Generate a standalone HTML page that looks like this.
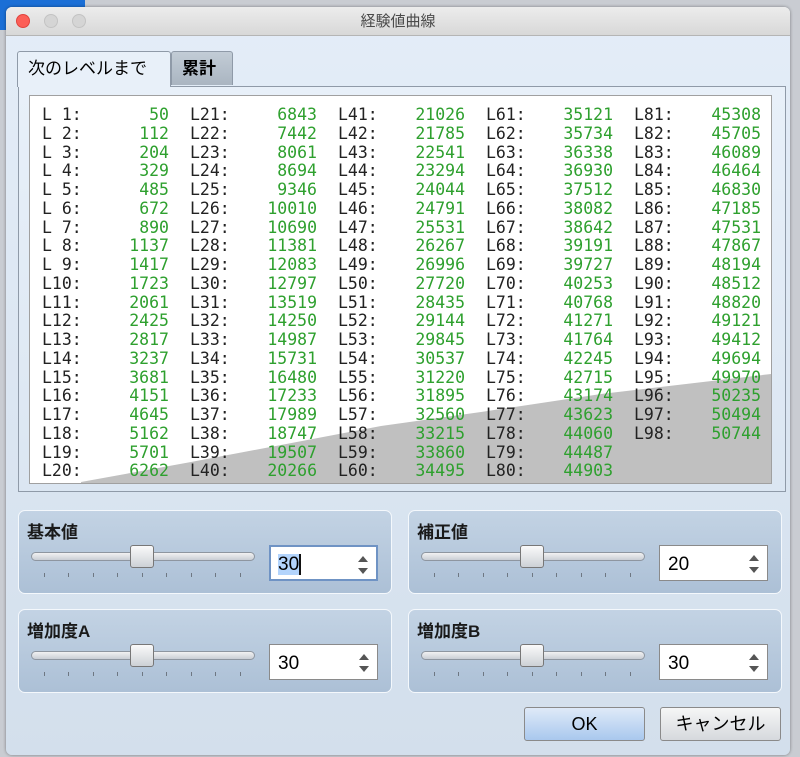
<!DOCTYPE html>
<html><head><meta charset="utf-8"><style>
*{margin:0;padding:0;box-sizing:border-box}
body{width:800px;height:757px;overflow:hidden;background:#c9ccd2;font-family:"Liberation Sans","Noto Sans CJK JP",sans-serif;position:relative}
.bgl{position:absolute;left:0;top:0;width:85px;height:30px;background:#1b6fd6}
.win{position:absolute;left:6px;top:7px;width:784px;height:748px;border-radius:6px;overflow:hidden;background:linear-gradient(#e4edf8,#d3dfec);box-shadow:0 0 3px rgba(0,0,0,.4)}
.title{height:29px;background:linear-gradient(#ececec,#d8d8d8);border-bottom:1px solid #b5b5b5;text-align:center;font-size:15px;line-height:29px;color:#4a4a4a}
.dot{position:absolute;top:7px;width:14px;height:14px;border-radius:50%;background:#d5d5d5;border:1px solid #c3c3c3}
.abs{position:absolute}
.tab{position:absolute;font-size:17px;line-height:34px;padding-left:10px;border:1px solid #8f9aa8;border-bottom:none;border-radius:3px 3px 0 0}
.pane{position:absolute;left:12px;top:79px;width:768px;height:406px;border:1px solid #8f9aa8;background:linear-gradient(#e8f0f9,#dbe6f2)}
.box{position:absolute;left:10px;top:8px;width:743px;height:389px;background:#fff;border:1px solid #a0a0a0;overflow:hidden}
.col{position:absolute;top:10px;font-family:"DejaVu Sans Mono","Liberation Mono",monospace;font-size:16.5px;line-height:18.75px;white-space:pre}
.lab{color:#222}.num{color:#2ea02e;text-align:right}
.grp{position:absolute;width:374px;height:84px;border:1px solid #f4f8fc;border-radius:7px;background:linear-gradient(#c3d3e4,#acc0d6)}
.grp .t{position:absolute;left:8px;top:7px;font-size:17px;font-weight:bold;color:#1a1a1a}
.track{position:absolute;left:12px;top:41px;width:224px;height:9px;border:1px solid #8e96a0;border-radius:5px;background:linear-gradient(#f2f2f2,#c9ced5)}
.thumb{position:absolute;left:111px;top:34px;width:24px;height:23px;border:1px solid #777;border-radius:3px;background:linear-gradient(#fafafa,#cdd1d6)}
.ticks{position:absolute;left:25px;top:62px;width:200px;height:4px}
.ticks i{position:absolute;top:0;width:1px;height:4px;background:#6e7782}
.spin{position:absolute;left:250px;top:34px;width:109px;height:36px;background:#fff;border:1px solid #8a8a8a;font-size:19px;line-height:38px;padding-left:8px}
.spin .a{position:absolute;right:8px;top:9px;width:0;height:0;border-left:5px solid transparent;border-right:5px solid transparent;border-bottom:6px solid #555}
.spin .b{position:absolute;right:8px;top:21px;width:0;height:0;border-left:5px solid transparent;border-right:5px solid transparent;border-top:6px solid #555}
.btn{position:absolute;top:700px;height:34px;border:1px solid #8a8a8a;border-radius:3px;text-align:center;font-size:18px;line-height:32px}
</style></head><body>
<div class="bgl"></div>
<div class="win">
<div class="title">経験値曲線</div>
<div class="dot" style="left:10px;background:#fc5f57;border-color:#e0443e"></div>
<div class="dot" style="left:38px"></div>
<div class="dot" style="left:66px"></div>
<div class="pane">
<div class="box">
<svg class="abs" style="left:0;top:0" width="743" height="389"><polygon fill="#c0c0c0" points="51,389 51,386 161,366 351,330 451,316 571,298 741,278 743,278 743,389"/></svg>
<div class="col lab" style="left:12px">L 1:
L 2:
L 3:
L 4:
L 5:
L 6:
L 7:
L 8:
L 9:
L10:
L11:
L12:
L13:
L14:
L15:
L16:
L17:
L18:
L19:
L20:</div>
<div class="col num" style="left:80px;width:59px">50
112
204
329
485
672
890
1137
1417
1723
2061
2425
2817
3237
3681
4151
4645
5162
5701
6262</div>
<div class="col lab" style="left:160px">L21:
L22:
L23:
L24:
L25:
L26:
L27:
L28:
L29:
L30:
L31:
L32:
L33:
L34:
L35:
L36:
L37:
L38:
L39:
L40:</div>
<div class="col num" style="left:220px;width:67px">6843
7442
8061
8694
9346
10010
10690
11381
12083
12797
13519
14250
14987
15731
16480
17233
17989
18747
19507
20266</div>
<div class="col lab" style="left:308px">L41:
L42:
L43:
L44:
L45:
L46:
L47:
L48:
L49:
L50:
L51:
L52:
L53:
L54:
L55:
L56:
L57:
L58:
L59:
L60:</div>
<div class="col num" style="left:368px;width:67px">21026
21785
22541
23294
24044
24791
25531
26267
26996
27720
28435
29144
29845
30537
31220
31895
32560
33215
33860
34495</div>
<div class="col lab" style="left:456px">L61:
L62:
L63:
L64:
L65:
L66:
L67:
L68:
L69:
L70:
L71:
L72:
L73:
L74:
L75:
L76:
L77:
L78:
L79:
L80:</div>
<div class="col num" style="left:516px;width:67px">35121
35734
36338
36930
37512
38082
38642
39191
39727
40253
40768
41271
41764
42245
42715
43174
43623
44060
44487
44903</div>
<div class="col lab" style="left:604px">L81:
L82:
L83:
L84:
L85:
L86:
L87:
L88:
L89:
L90:
L91:
L92:
L93:
L94:
L95:
L96:
L97:
L98:</div>
<div class="col num" style="left:664px;width:67px">45308
45705
46089
46464
46830
47185
47531
47867
48194
48512
48820
49121
49412
49694
49970
50235
50494
50744</div>
</div></div>
<div class="tab" style="left:11px;top:44px;width:154px;height:36px;background:#e8f0f9;z-index:2">次のレベルまで</div>
<div class="tab" style="left:165px;top:44px;width:62px;height:34px;background:linear-gradient(#c2ccd6,#aab5c1);font-weight:bold">累計</div>

<div class="grp" style="left:12px;top:503px"><div class="t">基本値</div><div class="track"></div><div class="ticks"><i style="left:0"></i><i style="left:24px"></i><i style="left:49px"></i><i style="left:73px"></i><i style="left:98px"></i><i style="left:122px"></i><i style="left:147px"></i><i style="left:171px"></i><i style="left:196px"></i></div><div class="thumb"></div>
<div class="spin" style="border:2px solid #6f93c4;line-height:36px;padding-left:7px"><span style="background:#b3d4fc">30</span><span style="border-left:2px solid #111;margin-left:0"></span><i class="a"></i><i class="b"></i></div></div>
<div class="grp" style="left:402px;top:503px"><div class="t">補正値</div><div class="track"></div><div class="ticks"><i style="left:0"></i><i style="left:24px"></i><i style="left:49px"></i><i style="left:73px"></i><i style="left:98px"></i><i style="left:122px"></i><i style="left:147px"></i><i style="left:171px"></i><i style="left:196px"></i></div><div class="thumb"></div>
<div class="spin">20<i class="a"></i><i class="b"></i></div></div>
<div class="grp" style="left:12px;top:602px"><div class="t">増加度A</div><div class="track"></div><div class="ticks"><i style="left:0"></i><i style="left:24px"></i><i style="left:49px"></i><i style="left:73px"></i><i style="left:98px"></i><i style="left:122px"></i><i style="left:147px"></i><i style="left:171px"></i><i style="left:196px"></i></div><div class="thumb"></div>
<div class="spin">30<i class="a"></i><i class="b"></i></div></div>
<div class="grp" style="left:402px;top:602px"><div class="t">増加度B</div><div class="track"></div><div class="ticks"><i style="left:0"></i><i style="left:24px"></i><i style="left:49px"></i><i style="left:73px"></i><i style="left:98px"></i><i style="left:122px"></i><i style="left:147px"></i><i style="left:171px"></i><i style="left:196px"></i></div><div class="thumb"></div>
<div class="spin">30<i class="a"></i><i class="b"></i></div></div>

<div class="btn" style="left:518px;width:121px;background:linear-gradient(#dfeaf8,#a9c8ee)">OK</div>
<div class="btn" style="left:654px;width:121px;background:linear-gradient(#f6f6f6,#d6d9dd)">キャンセル</div>
</div>
</body></html>
